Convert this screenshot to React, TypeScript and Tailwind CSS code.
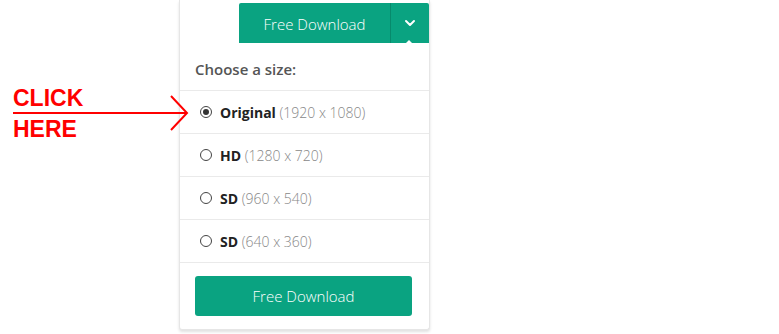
import { ChevronDown } from 'lucide-react';

const sizes = [
  { name: 'Original', dims: '(1920 x 1080)', checked: true },
  { name: 'HD', dims: '(1280 x 720)' },
  { name: 'SD', dims: '(960 x 540)' },
  { name: 'SD', dims: '(640 x 360)' },
];

function Radio({ checked }: { checked?: boolean }) {
  return (
    <span className="flex h-[12px] w-[12px] items-center justify-center rounded-full border border-[#444] bg-white">
      {checked && <span className="h-[6px] w-[6px] rounded-full bg-[#333]" />}
    </span>
  );
}

export default function App() {
  return (
    <div className="relative h-[334px] w-[779px] bg-white font-['Open_Sans',sans-serif]">
      {/* annotation */}
      <div className="absolute left-[13px] top-[83px] font-['Liberation_Sans',sans-serif] text-[23px] font-bold leading-[31px] text-[#ff0000]">
        <div>CLICK</div>
        <div>HERE</div>
      </div>
      <svg className="absolute left-[12px] top-[94px]" width="178" height="38" viewBox="0 0 178 38">
        <path d="M1 19 H175 M159 2 L175 19 L159 36" fill="none" stroke="#ff0000" strokeWidth="2" />
      </svg>

      <div className="ml-[179px] w-[251px] rounded-b-[3px] border-x border-b border-[#e6e6e6] bg-white shadow-[0_2px_3px_rgba(0,0,0,0.12)]">
        <div className="flex justify-end pt-[3px]">
          <div className="relative flex h-[40px] w-[190px] rounded-t-[2px] bg-[#0aa381] text-white">
            <div className="flex w-[152px] items-center justify-center border-r border-[#078a6c] pt-[2px] text-[15px] font-light">
              Free Download
            </div>
            <div className="flex flex-1 items-center justify-center">
              <ChevronDown size={16} strokeWidth={3} />
            </div>
            <span className="absolute bottom-[-1px] right-[16px] h-0 w-0 border-x-[4px] border-b-[4px] border-x-transparent border-b-white" />
          </div>
        </div>
        <div className="flex h-[48px] items-center border-b border-[#eaeaea] px-[15px] pt-[5px] text-[15px] font-semibold text-[#555]">
          Choose a size:
        </div>
        {sizes.map((s, i) => (
          <div
            key={i}
            className="flex h-[43px] items-center gap-[8px] border-b border-[#eaeaea] pl-[20px] text-[14px]"
          >
            <Radio checked={s.checked} />
            <span>
              <span className="font-bold text-[#222]">{s.name}</span>{' '}
              <span className="font-light text-[#888]">{s.dims}</span>
            </span>
          </div>
        ))}
        <div className="px-[15px] pb-[13px] pt-[13px]">
          <button className="flex h-[40px] w-[217px] items-center justify-center rounded-[3px] bg-[#0aa381] text-[15px] font-light text-white">
            Free Download
          </button>
        </div>
      </div>
    </div>
  );
}
